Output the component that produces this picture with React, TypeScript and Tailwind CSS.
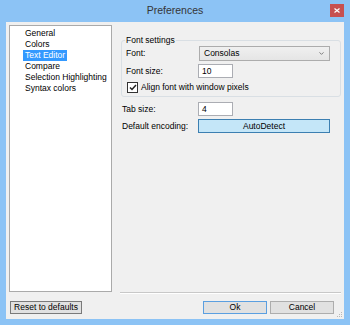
import { ChevronDown } from 'lucide-react';

const items = ['General', 'Colors', 'Text Editor', 'Compare', 'Selection Highlighting', 'Syntax colors'];

export default function App() {
  return (
    <div className="w-[350px] h-[325px] bg-[#8cc3f5] flex flex-col font-['Liberation_Sans',Arial,sans-serif] text-[8.5px] text-black">
      {/* Title bar */}
      <div className="relative h-[22px] flex items-center justify-center text-[10.5px] text-[#353535]">
        Preferences
        <div className="absolute right-[6px] top-[4px] w-[14px] h-[13px] bg-[#c75050] flex items-center justify-center">
          <svg width="6" height="5" viewBox="0 0 6 5">
            <path d="M0.5 0.5 L5.5 4.5 M5.5 0.5 L0.5 4.5" stroke="#fff" strokeWidth="1.2" />
          </svg>
        </div>
      </div>

      {/* Client area */}
      <div className="relative mx-[6px] mb-[6px] flex-1 bg-[#f0f0f0] flex flex-col">
        <div className="flex h-[272px] pl-[3px] pt-[3px]">
          {/* Page list */}
          <div className="w-[103px] h-[267px] border border-[#aaaaaa] bg-white pt-[1.5px] pl-[13px] flex flex-col items-start">
            {items.map((item) => (
              <div
                key={item}
                className={`h-[11.2px] px-[2px] leading-[11.2px] whitespace-nowrap ${
                  item === 'Text Editor' ? 'bg-[#3399ff] text-white' : ''
                }`}
              >
                {item}
              </div>
            ))}
          </div>

          {/* Page content */}
          <div className="flex-1 flex flex-col pl-[9px] pr-[3px]">
            <fieldset className="mt-[9px] border border-[#d9dfe4] rounded-[3px] px-[4px] pb-[3px]">
              <legend className="px-[1px] -ml-[1px] leading-[12px]">Font settings</legend>
              <div className="h-[15px] flex items-center">
                <span className="w-[73px]">Font:</span>
                <div className="w-[131px] h-[15px] border border-[#acacac] bg-gradient-to-b from-[#f0f0f0] to-[#e5e5e5] flex items-center pl-[4px] pr-[4px]">
                  <span className="flex-1">Consolas</span>
                  <ChevronDown size={7} strokeWidth={3} className="text-[#707070]" />
                </div>
              </div>
              <div className="mt-[3px] h-[14px] flex items-center">
                <span className="w-[72px]">Font size:</span>
                <div className="w-[35px] h-[14px] border border-[#abadb3] bg-white flex items-center pl-[3px]">10</div>
              </div>
              <div className="mt-[4px] h-[11px] flex items-center pl-[1px]">
                <div className="w-[11px] h-[11px] border border-[#333] bg-white flex items-center justify-center">
                  <svg width="8" height="7" viewBox="0 0 8 7">
                    <path d="M1 3.5 L3 5.5 L7 1" stroke="#222" strokeWidth="1.5" fill="none" />
                  </svg>
                </div>
                <span className="ml-[3px]">Align font with window pixels</span>
              </div>
            </fieldset>

            <div className="mt-[5px] h-[14px] flex items-center pl-[1px]">
              <span className="w-[76px]">Tab size:</span>
              <div className="w-[35px] h-[14px] border border-[#abadb3] bg-white flex items-center pl-[3px]">4</div>
            </div>
            <div className="mt-[3px] h-[14px] flex items-center pl-[1px]">
              <span className="w-[76px]">Default encoding:</span>
              <div className="w-[132px] h-[14px] border border-[#3c7fb1] bg-[#c4e6f8] flex items-center justify-center">
                AutoDetect
              </div>
            </div>

            <div className="mt-auto ml-[-1px] h-[2px] border-t border-[#c8c8c8] border-b border-b-white" />
          </div>
        </div>

        {/* Buttons */}
        <div className="mt-[7px] h-[13px] flex items-center pl-[4px] pr-[10px]">
          <div className="w-[72px] h-[13px] border border-[#7a7a7a] bg-[#e1e1e1] flex items-center justify-center">
            Reset to defaults
          </div>
          <div className="ml-auto w-[64px] h-[13px] border border-[#5b9fe0] bg-[#e1e1e1] flex items-center justify-center">
            Ok
          </div>
          <div className="ml-[3px] w-[64px] h-[13px] border border-[#adadad] bg-[#e1e1e1] flex items-center justify-center">
            Cancel
          </div>
        </div>

        <svg className="absolute right-[1px] bottom-[1px]" width="7" height="7" viewBox="0 0 7 7">
          <rect x="5" y="1" width="1" height="1" fill="#b8b8b8" />
          <rect x="3" y="3" width="1" height="1" fill="#b8b8b8" />
          <rect x="5" y="3" width="1" height="1" fill="#b8b8b8" />
          <rect x="1" y="5" width="1" height="1" fill="#b8b8b8" />
          <rect x="3" y="5" width="1" height="1" fill="#b8b8b8" />
          <rect x="5" y="5" width="1" height="1" fill="#b8b8b8" />
        </svg>
      </div>
    </div>
  );
}
